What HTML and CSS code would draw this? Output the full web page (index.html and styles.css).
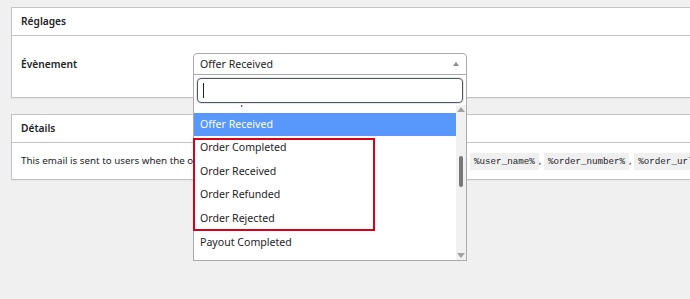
FILE: index.html
```html
<!DOCTYPE html>
<html lang="fr">
<head>
    <meta charset="UTF-8">
    <meta name="viewport" content="width=device-width, initial-scale=1.0">
    <title>Réglages</title>
    <link rel="stylesheet" href="styles.css">
</head>
<body>
    <div class="wrap">
        <div class="postbox">
            <h2 class="postbox-title">Réglages</h2>
            <div class="postbox-body">
                <div class="field-row">
                    <label class="field-label">Évènement</label>
                    <div class="select-wrap">
                        <div class="select-box">
                            <span class="select-value">Offer Received</span>
                            <span class="select-arrow"></span>
                        </div>
                        <div class="dropdown">
                            <div class="dropdown-search">
                                <div class="search-input"><span class="caret"></span></div>
                            </div>
                            <div class="dropdown-results">
                                <ul class="options">
                                    <li>Offer Expired</li>
                                    <li class="is-active">Offer Received</li>
                                    <li>Order Completed</li>
                                    <li>Order Received</li>
                                    <li>Order Refunded</li>
                                    <li>Order Rejected</li>
                                    <li>Payout Completed</li>
                                    <li>Payout Failed</li>
                                </ul>
                                <div class="scrollbar">
                                    <span class="scroll-up"></span>
                                    <span class="scroll-track"><span class="scroll-thumb"></span></span>
                                    <span class="scroll-down"></span>
                                </div>
                            </div>
                            <div class="highlight-box"></div>
                        </div>
                    </div>
                </div>
            </div>
        </div>

        <div class="postbox">
            <h2 class="postbox-title">Détails</h2>
            <div class="postbox-body details-body">
                <p class="description">This email is sent to users when the order status has changed to one of the states. Available tags: <code>%user_name%</code>, <code>%order_number%</code>, <code>%order_url%</code></p>
            </div>
        </div>
    </div>
</body>
</html>
```

FILE: styles.css
```css
html {
    overflow: hidden;
}
body {
    margin: 0;
    padding: 0;
    min-height: 100vh;
    background: #f0f0f1;
    color: #1d2327;
    font-family: "Noto Sans", Arial, sans-serif;
    font-size: 10.6px;
}
.wrap {
    padding: 7px 0 0 11px;
    width: 760px;
}
.postbox {
    background: #fff;
    border: 1px solid #c3c4c7;
    box-shadow: 0 1px 1px rgba(0, 0, 0, 0.04);
    margin-bottom: 16px;
}
.postbox-title {
    margin: 0;
    font-size: 10.2px;
    font-weight: 600;
    line-height: 27px;
    padding: 0 9px;
    border-bottom: 1px solid #c3c4c7;
}
.postbox-body {
    padding: 17px 9px 22px;
}
.field-row {
    display: flex;
    align-items: flex-start;
}
.field-label {
    width: 172px;
    font-size: 10.2px;
    font-weight: 600;
    line-height: 22px;
}

/* select ouvert */
.select-wrap {
    position: relative;
    width: 274px;
}
.select-box {
    box-sizing: border-box;
    height: 22px;
    border: 1px solid #aaa;
    border-radius: 4px 4px 0 0;
    display: flex;
    align-items: center;
    justify-content: space-between;
    padding: 0 6px;
}
.select-arrow {
    width: 0;
    height: 0;
    border-left: 3px solid transparent;
    border-right: 3px solid transparent;
    border-bottom: 4px solid #888;
    margin-right: 1px;
}
.dropdown {
    position: absolute;
    top: 21px;
    left: 0;
    width: 274px;
    box-sizing: border-box;
    background: #fff;
    border: 1px solid #aaa;
    z-index: 10;
}
.dropdown-search {
    padding: 3px 3px 2px;
}
.search-input {
    box-sizing: border-box;
    height: 25px;
    border: 1px solid #50575e;
    border-radius: 4px;
    box-shadow: 0 0 0 1px rgba(80, 87, 94, 0.15);
    display: flex;
    align-items: center;
    padding-left: 5px;
}
.caret {
    width: 1px;
    height: 15px;
    background: #1d2327;
}
.dropdown-results {
    display: flex;
    height: 155px;
    overflow: hidden;
}
.options {
    list-style: none;
    margin: -16px 0 0;
    padding: 0;
    flex: 1;
}
.options li {
    padding: 4px 6px;
    line-height: 15.6px;
}
.options li.is-active {
    background: #5897fb;
    color: #fff;
}
.scrollbar {
    width: 10px;
    background: #f1f1f1;
    display: flex;
    flex-direction: column;
    align-items: center;
}
.scroll-up, .scroll-down {
    width: 0;
    height: 0;
    border-left: 4px solid transparent;
    border-right: 4px solid transparent;
}
.scroll-up {
    border-bottom: 5px solid #a3a3a3;
    margin-top: 2px;
}
.scroll-down {
    border-top: 5px solid #a3a3a3;
    margin-bottom: 2px;
}
.scroll-track {
    flex: 1;
    display: flex;
    flex-direction: column;
    align-items: center;
}
.scroll-thumb {
    width: 4px;
    height: 31px;
    margin-top: 44px;
    border-radius: 2px;
    background: #787878;
}
.highlight-box {
    position: absolute;
    left: -1px;
    top: 63px;
    width: 182px;
    height: 93px;
    box-sizing: border-box;
    border: 2px solid #d9001b;
}

/* détails */
.details-body {
    padding: 9px 9px 8px;
}
.description {
    margin: 0;
    white-space: nowrap;
    line-height: 18px;
    font-size: 9.8px;
}
code {
    font-family: "Liberation Mono", "DejaVu Sans Mono", monospace;
    font-size: 9.2px;
    background: rgba(0, 0, 0, 0.06);
    padding: 3px 4px;
}
```
